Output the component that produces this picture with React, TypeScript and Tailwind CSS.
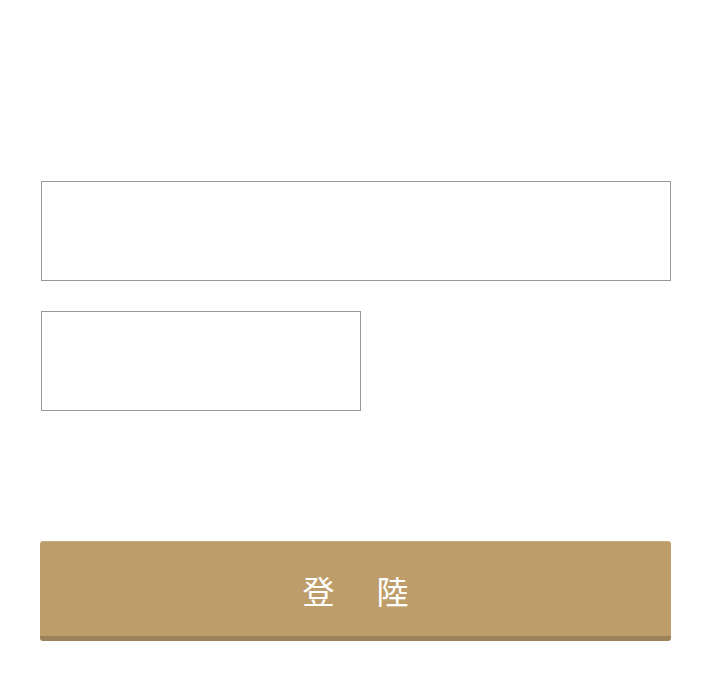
import React from 'react'

export default function App() {
    return (
        <div className="min-h-screen w-full bg-white">
            <div className="px-[41px] pt-[181px]">
                <input
                    type="text"
                    className="block w-full h-[100px] border border-[#999999] bg-white outline-none"
                />
                <input
                    type="text"
                    className="block mt-[30px] w-[320px] h-[100px] border border-[#999999] bg-white outline-none"
                />
            </div>
            <div className="px-[40px] pt-[130px]">
                <button
                    className="w-[631px] h-[100px] rounded-[3px] bg-[#bd9d6a] border-b-[5px] border-[#9c8159] border-t border-t-[#c9ad7f] text-white text-[32px] tracking-[5px] pl-[5px] pt-[1px]"
                    style={{ fontFamily: '"Noto Sans CJK TC", "Noto Sans CJK SC", sans-serif', fontWeight: 400 }}
                >
                    登　陸
                </button>
            </div>
        </div>
    )
}
